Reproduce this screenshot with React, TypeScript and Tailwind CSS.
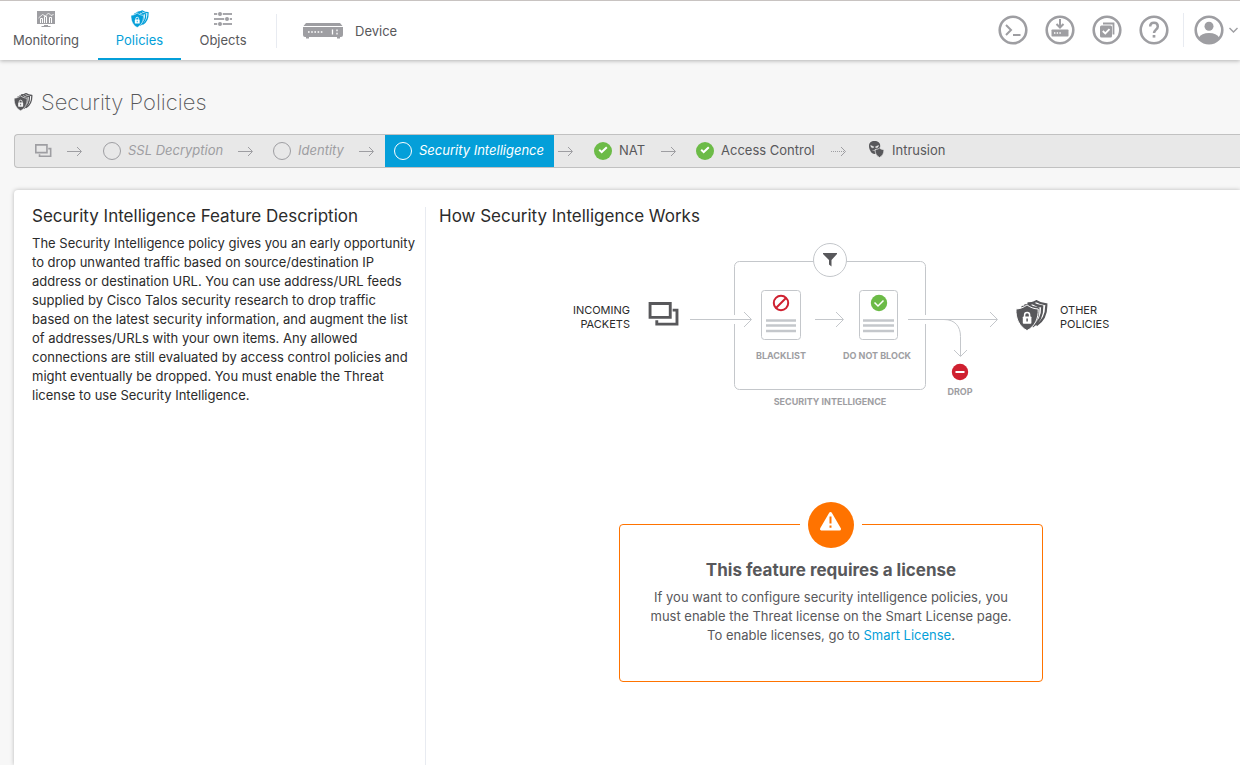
import type { ReactNode } from "react";

function ShieldsIcon({ className, cover }: { className: string; cover: string }) {
  return (
    <svg viewBox="0 0 32 31" className={className} aria-hidden="true">
      <g fill={cover} stroke="currentColor" strokeWidth="2.2">
        <path d="M11.5 3.4C14.7 3.6 17.6 2.8 20.4 1.1C23.2 3 26.6 4 30.3 4.3C30.6 13.5 27.4 21 20.4 25.2" />
        <path d="M8.5 5.2C11.5 5.4 14 4.6 16.4 3C19.2 5 22.6 6.2 26.2 6.4C26.5 15 23.4 22.4 16.4 26.6" />
        <path d="M5.5 7C8 7 10.3 6.3 12.6 4.8C15.5 6.9 18.9 8.1 22.4 8.3C22.7 17 19.4 24 12.6 28" />
      </g>
      <path
        d="M0 9C4.3 8.8 8 7.3 11 4.9C14 7.3 17.9 8.8 22.2 9C22.6 18.8 18.8 26.3 11 30.6C3.3 26.3-.4 18.8 0 9Z"
        fill="currentColor"
        stroke={cover}
        strokeWidth="1"
      />
      <rect x="6.8" y="16.5" width="8.6" height="7.2" rx="0.8" fill={cover} />
      <path d="M8.6 17v-2.1a2.5 2.5 0 0 1 5 0V17" fill="none" stroke={cover} strokeWidth="1.5" />
      <path d="M11.1 18.6v2.8" stroke="currentColor" strokeWidth="1.5" />
    </svg>
  );
}

function PacketsIcon({ className }: { className: string }) {
  return (
    <svg viewBox="0 0 32 26" className={className} fill="none" stroke="currentColor" strokeWidth="3" aria-hidden="true">
      <path d="M1.5 1.5h21v14.5h-21zM25 8.5h4.5v14.5H8.5v-4" />
    </svg>
  );
}

function CheckIcon({ className }: { className: string }) {
  return (
    <svg viewBox="0 0 18 18" className={className} aria-hidden="true">
      <circle cx="9" cy="9" r="9" fill="#6cbb47" />
      <path d="M5.2 7.7l2.5 2.4 5.1-4.8" fill="none" stroke="#fff" strokeWidth="2" />
    </svg>
  );
}

function EmptyCircle() {
  return <span className="size-[18px] shrink-0 rounded-full border border-current" />;
}

function StepArrow({ className, dotted = false }: { className: string; dotted?: boolean }) {
  return (
    <li className={`shrink-0 text-[#9e9ea2] ${className}`} aria-hidden="true">
      <svg viewBox="0 0 15 11" className="block h-[11px] w-[15px]" fill="none" stroke="currentColor">
        <path d="M0 5.5h14" strokeDasharray={dotted ? "1 1" : undefined} />
        <path d="M10 1l4.5 4.5L10 10" />
      </svg>
    </li>
  );
}

function Step({ className, icon, children }: { className: string; icon: ReactNode; children: ReactNode }) {
  return (
    <li className={`h-full shrink-0 ${className}`}>
      <a href="#step" className="flex h-full items-center gap-[7px] pl-[9px] whitespace-nowrap">
        {icon}
        {children}
      </a>
    </li>
  );
}

function NavTab({ className, icon, label }: { className: string; icon: ReactNode; label: string }) {
  return (
    <a href="#nav" className={`flex h-[59px] flex-col items-center pt-2 ${className}`}>
      <span className="flex h-5 items-center">{icon}</span>
      <span className="leading-[23px]">{label}</span>
    </a>
  );
}

function RoundButton({ label, children }: { label: string; children: ReactNode }) {
  return (
    <button type="button" aria-label={label} className="block">
      <svg viewBox="0 0 30 30" className="block size-[30px]" fill="none" stroke="currentColor">
        <circle cx="15" cy="15" r="13.3" strokeWidth="2.6" />
        {children}
      </svg>
    </button>
  );
}

function Header() {
  return (
    <header className="relative flex h-[60px] items-start justify-between border-t border-[#c8c3c1] bg-white shadow-[0_1px_4px_rgba(0,0,0,0.28)]">
      <nav className="flex items-start">
        <NavTab
          className="mr-[6px] w-[92px]"
          label="Monitoring"
          icon={
            <svg viewBox="0 0 18 16" className="h-4 w-[18px] text-[#9e9ea2]" aria-hidden="true">
              <path d="M0 0h18v13H0zM7 14h4v1h2.5v1h-9v-1H7z" fill="currentColor" />
              <path d="M3.5 12V7.5h2V12M7.5 12V5.5h2V12M12.5 12V6.5h2V12" fill="none" stroke="#fff" />
              <path d="M1.5 7l4-3.5 3 1.5 3-3 2.5 2.5 2.5-1" fill="none" stroke="#fff" strokeWidth=".8" />
            </svg>
          }
        />
        <NavTab
          className="w-[83px] border-b-2 border-[#049fd9] text-[#049fd9]"
          label="Policies"
          icon={<ShieldsIcon className="h-[18px] w-[18px]" cover="#fff" />}
        />
        <NavTab
          className="w-[84px]"
          label="Objects"
          icon={
            <svg viewBox="0 0 18 14" className="mb-px h-[14px] w-[18px] text-[#9e9ea2]" fill="currentColor" aria-hidden="true">
              <path d="M0 1.5h3v1H0zM9 1.5h9v1H9zM0 6.5h10v1H0zM16 6.5h2v1h-2zM0 11.5h3v1H0zM9 11.5h9v1H9z" stroke="currentColor" strokeWidth=".8" />
              <circle cx="6" cy="2" r="2" />
              <circle cx="13" cy="7" r="2" />
              <circle cx="6" cy="12" r="2" />
            </svg>
          }
        />
        <a href="#device" className="mt-[13px] ml-[11px] flex h-[34px] items-center gap-3 border-l border-[#e8ebf1] pl-[26px]">
          <svg viewBox="0 0 40 16" className="h-4 w-10 text-[#9e9ea2]" fill="currentColor" aria-hidden="true">
            <path d="M3 0h34l2.5 3H.5zM0 4h40v8a2 2 0 0 1-2 2H2a2 2 0 0 1-2-2zM3 14h3v1.500H3zM34 14h3v1.500h-3z" />
            <path d="M5 9h15" stroke="#fff" strokeWidth="1.6" strokeDasharray="1.6 1.6" />
            <path d="M29.5 6.500v5M34 6.500v1.8M34 9.700v1.8" stroke="#fff" strokeWidth="1.3" />
          </svg>
          <span className="pt-0.5">Device</span>
        </a>
      </nav>
      <div className="mt-3 flex h-[34px] items-center pr-px text-[#9e9ea2]">
        <div className="flex gap-[17px] pr-[14px]">
          <RoundButton label="CLI console">
            <path d="M8 10l5 5-5 5M15 20h7.5" strokeWidth="2" />
          </RoundButton>
          <RoundButton label="Deployment">
            <path d="M15 4v8M11.5 9l3.5 3.5L18.5 9" strokeWidth="2" />
            <rect x="6.5" y="14.5" width="17" height="7" rx=".8" fill="currentColor" stroke="none" />
            <path d="M9 18h7" stroke="#fff" strokeWidth="1.4" strokeDasharray="1.4 1.3" />
          </RoundButton>
          <RoundButton label="Task list">
            <path d="M11 8.5h10.5v11" strokeWidth="1.8" />
            <rect x="8" y="10.5" width="12" height="12" rx="1.5" fill="currentColor" stroke="none" />
            <path d="M10.8 16l2.5 2.5 4.2-4.3" stroke="#fff" strokeWidth="1.8" />
          </RoundButton>
          <RoundButton label="Help">
            <path d="M11.2 11.5c0-2.5 1.500-3.700 3.800-3.700s3.800 1.400 3.800 3.600c0 3-3.800 3.400-3.800 6.700" strokeWidth="2.500" />
            <path d="M15 20v2.600" strokeWidth="2.700" />
          </RoundButton>
        </div>
        <div className="flex h-[34px] items-center border-l border-[#e8ebf1] pl-[10px]">
          <button type="button" aria-label="Account" className="flex items-center gap-1">
            <svg viewBox="0 0 30 30" className="size-[30px]" fill="currentColor" aria-hidden="true">
              <circle cx="15" cy="15" r="13.3" fill="none" stroke="currentColor" strokeWidth="2.6" />
              <circle cx="15" cy="11.3" r="4.5" />
              <path d="M4.5 23c2-3.5 5.5-5 10.5-5s8.5 1.5 10.5 5c-2.5 3.5-6 5.5-10.5 5.5S7 26.5 4.5 23z" />
            </svg>
            <svg viewBox="0 0 11 8" className="h-2 w-[11px]" fill="none" stroke="currentColor" strokeWidth="1.4" aria-hidden="true">
              <path d="M1.5 2l4 4 4-4" />
            </svg>
          </button>
        </div>
      </div>
    </header>
  );
}

function PolicySteps() {
  return (
    <ol className="mt-[17px] ml-[14px] flex h-[34px] items-center overflow-hidden rounded-l-sm border border-r-0 border-[#c1c1c1] bg-[#e8e8e8]">
      <li className="w-[52px] shrink-0 pl-5 text-[#9e9ea2]">
        <PacketsIcon className="h-[14px] w-[17px]" />
      </li>
      <StepArrow className="w-[27px]" />
      <Step className="w-[144px] text-[#9e9ea2] italic" icon={<EmptyCircle />}>SSL Decryption</Step>
      <StepArrow className="w-[26px]" />
      <Step className="w-[95px] text-[#9e9ea2] italic" icon={<EmptyCircle />}>Identity</Step>
      <StepArrow className="w-[26px]" />
      <Step className="w-[169px] bg-[#049fd9] text-white italic" icon={<EmptyCircle />}>Security Intelligence</Step>
      <StepArrow className="w-[31px] pl-1" />
      <Step className="w-[76px]" icon={<CheckIcon className="size-[18px]" />}>NAT</Step>
      <StepArrow className="w-[26px]" />
      <Step className="w-[144px]" icon={<CheckIcon className="size-[18px]" />}>Access Control</Step>
      <StepArrow className="w-[29px]" dotted />
      <Step
        className="w-[100px]"
        icon={
          <svg viewBox="0 0 16 17" className="mb-[3px] h-[17px] w-4" aria-hidden="true">
            <path d="M5.5 0C9 0 11.2 1.8 11.2 5c0 3.6-2.5 8-5.7 8S0 8.6 0 5c0-3.2 2-5 5.5-5z" fill="currentColor" />
            <path d="M1.7 4.5l3 1.3c0 1.5-2.8 1.3-3-1.3zM9.5 4.5l-3 1.3c0 1.5 2.8 1.3 3-1.3zM3.5 9.5h4" fill="#e8e8e8" stroke="#e8e8e8" strokeWidth=".5" />
            <path d="M6 8.5c1.8 0 3.3-.5 4.5-1.5 1.2 1 2.7 1.5 4.5 1.5 0 4-1.5 6.5-4.5 8C7.5 15 6 12.5 6 8.5z" fill="currentColor" stroke="#e8e8e8" strokeWidth=".8" />
          </svg>
        }
      >
        Intrusion
      </Step>
    </ol>
  );
}

function Diagram() {
  return (
    <figure className="relative mx-auto h-[180px] w-[582px]" aria-label="Traffic flow through security intelligence">
      <svg viewBox="0 0 582 180" className="absolute inset-0 size-full" fill="none" stroke="#c4c7cb" aria-hidden="true">
        <path d="M194.5 75V26.5a5 5 0 0 1 5-5h181a5 5 0 0 1 5 5V75M385.5 84v60.5a5 5 0 0 1-5 5h-181a5 5 0 0 1-5-5V84" />
        <circle cx="290" cy="20" r="16.5" fill="#fff" />
        <path d="M150 79.5h61M204 72l7.5 7.5L204 87M275 79.5h28M296 72l7.5 7.5L296 87M368 79.5h89M450 72l7.5 7.5L450 87" />
        <path d="M404 79.5c11 0 16.5 7 16.5 17V116M414 110l6.5 6.5 6.5-6.5" />
        <rect x="221.5" y="50.5" width="39" height="49" rx="3" fill="#fff" />
        <rect x="319.5" y="50.5" width="38" height="49" rx="3" fill="#fff" />
        <path d="M226 80.5h30M226 85.5h30M226 91h30M323 80.5h31M323 85.5h31M323 91h31" strokeWidth="2.5" />
        <path d="M283 13h14v1l-5.5 6v6.5l-2.5-2V20l-6-6z" fill="#58585b" stroke="none" />
        <circle cx="241" cy="63" r="7.2" stroke="#cf2030" strokeWidth="2" />
        <path d="M236 68l10-10" stroke="#cf2030" strokeWidth="2" />
        <circle cx="339" cy="63" r="8.2" fill="#6cbb47" stroke="none" />
        <path d="M334.5 62.5l3.5 3.5 5.5-5.5" stroke="#fff" strokeWidth="1.5" />
        <circle cx="420" cy="132" r="8.2" fill="#cf2030" stroke="none" />
        <path d="M415.5 132h9" stroke="#fff" strokeWidth="2" />
      </svg>
      <PacketsIcon className="absolute top-[62px] left-[108px] h-[25px] w-8 text-[#58585b]" />
      <ShieldsIcon className="absolute top-[60px] left-[476px] h-[31px] w-8 text-[#58585b]" cover="#fff" />
      <p className="absolute top-[63px] left-0 w-[90px] text-right text-[11px] leading-[14px] text-[#2b2b2b]">INCOMING<br />PACKETS</p>
      <p className="absolute top-[63px] left-[520px] text-[11px] leading-[14px] text-[#2b2b2b]">OTHER<br />POLICIES</p>
      <div className="text-center text-[9px] leading-3 font-bold whitespace-nowrap text-[#9e9ea2]">
        <p className="absolute top-[110px] left-[201px] w-20">BLACKLIST</p>
        <p className="absolute top-[110px] left-[296px] w-[82px]">DO NOT BLOCK</p>
        <p className="absolute top-[146px] left-[395px] w-[50px]">DROP</p>
        <p className="absolute top-[156px] left-[220px] w-[140px]">SECURITY INTELLIGENCE</p>
      </div>
    </figure>
  );
}

function LicenseNotice() {
  return (
    <section className="relative mx-auto mt-[104px] w-[424px] rounded-[4px] border border-[#ff7300] px-6 pt-[35px] pb-9 text-center">
      <div className="absolute -top-[23px] left-1/2 -translate-x-1/2 bg-white px-2">
        <svg viewBox="0 0 46 46" className="block size-[46px]" aria-hidden="true">
          <circle cx="23" cy="23" r="23" fill="#ff7300" />
          <path d="M22.5 11.5L13.5 27h18z" fill="#fff" stroke="#fff" strokeWidth="3" strokeLinejoin="round" />
          <path d="M22.5 14.5v7M22.5 23.5v2.2" stroke="#ff7300" strokeWidth="2" />
        </svg>
      </div>
      <h3 className="text-[17px] leading-5 font-bold">This feature requires a license</h3>
      <p className="mt-2 leading-[19px]">
        If you want to configure security intelligence policies, you
        <br />
        must enable the Threat license on the Smart License page.
        <br />
        To enable licenses, go to <a href="#license" className="text-[#049fd9]">Smart License</a>.
      </p>
    </section>
  );
}

export default function App() {
  return (
    <div className="flex min-h-screen flex-col overflow-x-hidden bg-[#f7f7f7] font-['Inter',sans-serif] text-[13px] text-[#58585b]">
      <Header />
      <h1 className="mt-[27px] ml-[14px] flex items-center gap-2 text-[22px] leading-[30px] font-extralight">
        <ShieldsIcon className="h-[18px] w-[19px]" cover="#f7f7f7" />
        Security Policies
      </h1>
      <PolicySteps />
      <main className="mt-[22px] ml-[14px] flex grow rounded-tl-[4px] bg-white pt-[17px] text-[#2b2b2b] shadow-[0_0_4px_rgba(0,0,0,0.25)]">
        <section className="w-[412px] shrink-0 border-r border-[#e8ebf1] pr-2 pl-[18px]">
          <h2 className="mb-2 text-[17px] leading-[19px]">Security Intelligence Feature Description</h2>
          <p className="leading-[19px]">
            The Security Intelligence policy gives you an early opportunity to drop unwanted traffic based on
            source/destination IP address or destination URL. You can use address/URL feeds supplied by Cisco Talos
            security research to drop traffic based on the latest security information, and augment the list of
            addresses/URLs with your own items. Any allowed connections are still evaluated by access control policies
            and might eventually be dropped. You must enable the Threat license to use Security Intelligence.
          </p>
        </section>
        <section className="grow pr-1">
          <h2 className="mb-[14px] pl-[13px] text-[17px] leading-[19px]">How Security Intelligence Works</h2>
          <Diagram />
          <div className="text-[#58585b]">
            <LicenseNotice />
          </div>
        </section>
      </main>
    </div>
  );
}
